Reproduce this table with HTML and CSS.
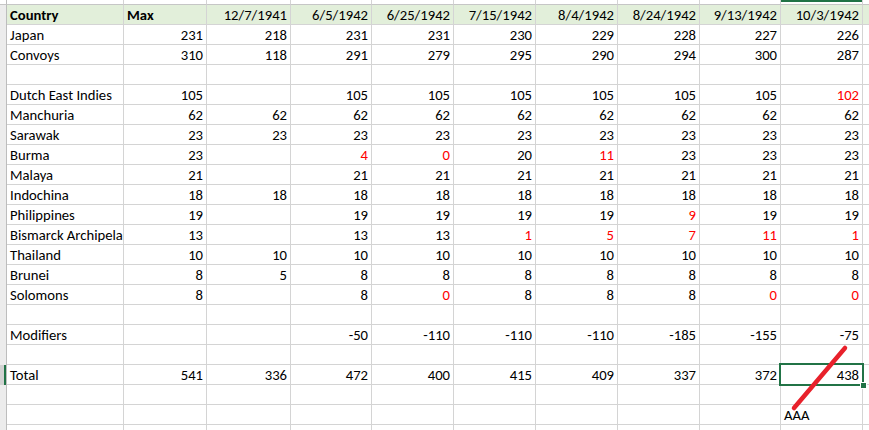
FILE: index.html
```html
<!DOCTYPE html>
<html>
<head>
<meta charset="utf-8">
<link rel="stylesheet" href="styles.css">
</head>
<body>
<div class="sheet">
  <div class="row top"><span class="rh"></span><span class="c"></span><span class="c"></span><span class="c"></span><span class="c"></span><span class="c"></span><span class="c"></span><span class="c"></span><span class="c"></span><span class="c"></span><span class="c colsel"></span><span class="c"></span></div>
  <div class="row head"><span class="rh"></span><span class="c b">Country</span><span class="c b">Max</span><span class="c n">12/7/1941</span><span class="c n">6/5/1942</span><span class="c n">6/25/1942</span><span class="c n">7/15/1942</span><span class="c n">8/4/1942</span><span class="c n">8/24/1942</span><span class="c n">9/13/1942</span><span class="c n">10/3/1942</span><span class="c"></span></div>
  <div class="row"><span class="rh"></span><span class="c">Japan</span><span class="c n">231</span><span class="c n">218</span><span class="c n">231</span><span class="c n">231</span><span class="c n">230</span><span class="c n">229</span><span class="c n">228</span><span class="c n">227</span><span class="c n">226</span><span class="c"></span></div>
  <div class="row"><span class="rh"></span><span class="c">Convoys</span><span class="c n">310</span><span class="c n">118</span><span class="c n">291</span><span class="c n">279</span><span class="c n">295</span><span class="c n">290</span><span class="c n">294</span><span class="c n">300</span><span class="c n">287</span><span class="c"></span></div>
  <div class="row"><span class="rh"></span><span class="c"></span><span class="c"></span><span class="c"></span><span class="c"></span><span class="c"></span><span class="c"></span><span class="c"></span><span class="c"></span><span class="c"></span><span class="c"></span><span class="c"></span></div>
  <div class="row"><span class="rh"></span><span class="c">Dutch East Indies</span><span class="c n">105</span><span class="c n"></span><span class="c n">105</span><span class="c n">105</span><span class="c n">105</span><span class="c n">105</span><span class="c n">105</span><span class="c n">105</span><span class="c n r">102</span><span class="c"></span></div>
  <div class="row"><span class="rh"></span><span class="c">Manchuria</span><span class="c n">62</span><span class="c n">62</span><span class="c n">62</span><span class="c n">62</span><span class="c n">62</span><span class="c n">62</span><span class="c n">62</span><span class="c n">62</span><span class="c n">62</span><span class="c"></span></div>
  <div class="row"><span class="rh"></span><span class="c">Sarawak</span><span class="c n">23</span><span class="c n">23</span><span class="c n">23</span><span class="c n">23</span><span class="c n">23</span><span class="c n">23</span><span class="c n">23</span><span class="c n">23</span><span class="c n">23</span><span class="c"></span></div>
  <div class="row"><span class="rh"></span><span class="c">Burma</span><span class="c n">23</span><span class="c n"></span><span class="c n r">4</span><span class="c n r">0</span><span class="c n">20</span><span class="c n r">11</span><span class="c n">23</span><span class="c n">23</span><span class="c n">23</span><span class="c"></span></div>
  <div class="row"><span class="rh"></span><span class="c">Malaya</span><span class="c n">21</span><span class="c n"></span><span class="c n">21</span><span class="c n">21</span><span class="c n">21</span><span class="c n">21</span><span class="c n">21</span><span class="c n">21</span><span class="c n">21</span><span class="c"></span></div>
  <div class="row"><span class="rh"></span><span class="c">Indochina</span><span class="c n">18</span><span class="c n">18</span><span class="c n">18</span><span class="c n">18</span><span class="c n">18</span><span class="c n">18</span><span class="c n">18</span><span class="c n">18</span><span class="c n">18</span><span class="c"></span></div>
  <div class="row"><span class="rh"></span><span class="c">Philippines</span><span class="c n">19</span><span class="c n"></span><span class="c n">19</span><span class="c n">19</span><span class="c n">19</span><span class="c n">19</span><span class="c n r">9</span><span class="c n">19</span><span class="c n">19</span><span class="c"></span></div>
  <div class="row"><span class="rh"></span><span class="c">Bismarck Archipelago</span><span class="c n">13</span><span class="c n"></span><span class="c n">13</span><span class="c n">13</span><span class="c n r">1</span><span class="c n r">5</span><span class="c n r">7</span><span class="c n r">11</span><span class="c n r">1</span><span class="c"></span></div>
  <div class="row"><span class="rh"></span><span class="c">Thailand</span><span class="c n">10</span><span class="c n">10</span><span class="c n">10</span><span class="c n">10</span><span class="c n">10</span><span class="c n">10</span><span class="c n">10</span><span class="c n">10</span><span class="c n">10</span><span class="c"></span></div>
  <div class="row"><span class="rh"></span><span class="c">Brunei</span><span class="c n">8</span><span class="c n">5</span><span class="c n">8</span><span class="c n">8</span><span class="c n">8</span><span class="c n">8</span><span class="c n">8</span><span class="c n">8</span><span class="c n">8</span><span class="c"></span></div>
  <div class="row"><span class="rh"></span><span class="c">Solomons</span><span class="c n">8</span><span class="c n"></span><span class="c n">8</span><span class="c n r">0</span><span class="c n">8</span><span class="c n">8</span><span class="c n">8</span><span class="c n r">0</span><span class="c n r">0</span><span class="c"></span></div>
  <div class="row"><span class="rh"></span><span class="c"></span><span class="c"></span><span class="c"></span><span class="c"></span><span class="c"></span><span class="c"></span><span class="c"></span><span class="c"></span><span class="c"></span><span class="c"></span><span class="c"></span></div>
  <div class="row"><span class="rh"></span><span class="c">Modifiers</span><span class="c n"></span><span class="c n"></span><span class="c n">-50</span><span class="c n">-110</span><span class="c n">-110</span><span class="c n">-110</span><span class="c n">-185</span><span class="c n">-155</span><span class="c n">-75</span><span class="c"></span></div>
  <div class="row"><span class="rh"></span><span class="c"></span><span class="c"></span><span class="c"></span><span class="c"></span><span class="c"></span><span class="c"></span><span class="c"></span><span class="c"></span><span class="c"></span><span class="c"></span><span class="c"></span></div>
  <div class="row"><span class="rh rowsel"></span><span class="c">Total</span><span class="c n">541</span><span class="c n">336</span><span class="c n">472</span><span class="c n">400</span><span class="c n">415</span><span class="c n">409</span><span class="c n">337</span><span class="c n">372</span><span class="c n">438</span><span class="c"></span></div>
  <div class="row"><span class="rh"></span><span class="c"></span><span class="c"></span><span class="c"></span><span class="c"></span><span class="c"></span><span class="c"></span><span class="c"></span><span class="c"></span><span class="c"></span><span class="c"></span><span class="c"></span></div>
  <div class="row"><span class="rh"></span><span class="c"></span><span class="c"></span><span class="c"></span><span class="c"></span><span class="c"></span><span class="c"></span><span class="c"></span><span class="c"></span><span class="c"></span><span class="c">AAA</span><span class="c"></span></div>
  <div class="row"><span class="rh"></span><span class="c"></span><span class="c"></span><span class="c"></span><span class="c"></span><span class="c"></span><span class="c"></span><span class="c"></span><span class="c"></span><span class="c"></span><span class="c"></span><span class="c"></span></div>

  <div class="selection"><span class="handle"></span></div>
  <svg class="ink" width="869" height="430" viewBox="0 0 869 430"><line x1="794" y1="408" x2="845" y2="348" stroke="#e8212b" stroke-width="4.5" stroke-linecap="round"/></svg>
</div>
</body>
</html>
```

FILE: styles.css
```css
html, body {
  margin: 0;
  padding: 0;
  background: #ffffff;
}
body {
  font-family: "Carlito", "Lato", "Liberation Sans", sans-serif;
  font-size: 14.67px;
  color: #000000;
  overflow: hidden;
}
.sheet {
  position: relative;
  width: 869px;
  height: 430px;
  overflow: hidden;
}
.row {
  display: grid;
  grid-template-columns: 7px 117px 83px 84px 81px 82px 82px 82px 82px 81px 82px 1fr;
  height: 20px;
}
.row.top {
  height: 5px;
}
.c {
  box-sizing: border-box;
  border-right: 1px solid #d4d4d4;
  border-bottom: 1px solid #d4d4d4;
  padding: 1px 3px 0 3px;
  white-space: nowrap;
  overflow: hidden;
  line-height: 19px;
  height: 100%;
}
.n {
  text-align: right;
}
.top .c {
  border-bottom-color: #c6c6c6;
}
.rh {
  box-sizing: border-box;
  background: #ececec;
  border-right: 1px solid #bdbdbd;
  height: 100%;
}
.top .rh {
  background: #ffffff;
  border-bottom: 1px solid #c6c6c6;
}
.rh.rowsel {
  background: #d2d2d2;
  box-shadow: inset -2px 0 0 #217346;
}
.colsel {
  box-shadow: inset 0 2px 0 #217346;
}
.head .c {
  background: #e2efda;
}
.b {
  font-weight: bold;
}
.r {
  color: #ff0000;
}
.selection {
  position: absolute;
  left: 779px;
  top: 363px;
  width: 85px;
  height: 23px;
  box-sizing: border-box;
  border: 2px solid #217346;
}
.handle {
  position: absolute;
  right: -5px;
  bottom: -5px;
  width: 5px;
  height: 5px;
  background: #217346;
  border: 1px solid #ffffff;
}
.ink {
  position: absolute;
  left: 0;
  top: 0;
  pointer-events: none;
}
```
